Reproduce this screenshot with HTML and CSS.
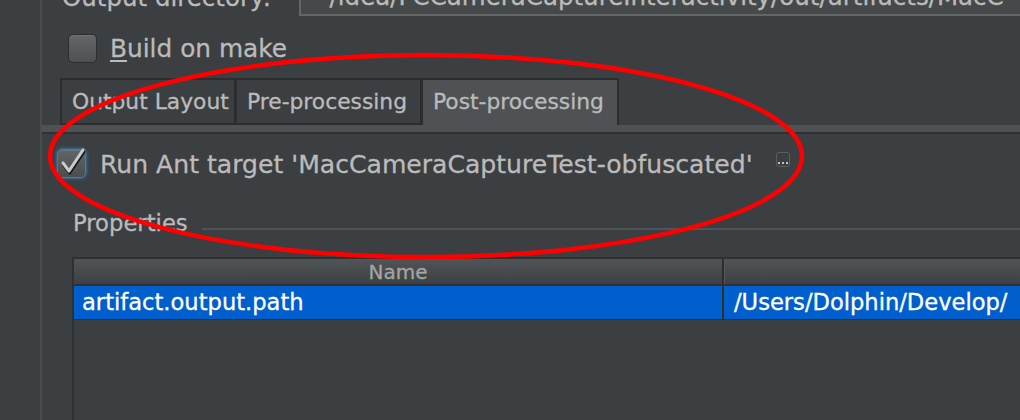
FILE: index.html
```html
<!DOCTYPE html>
<html>
<head>
<meta charset="utf-8">
<link rel="stylesheet" href="styles.css">
</head>
<body>
<div class="app">
  <div class="sidebar"></div>
  <div class="main">
    <div class="outdir-row">
      <span class="outdir-label">Output directory:</span>
      <div class="outdir-field">~/idea/FCCameraCaptureInteractivity/out/artifacts/MacC</div>
    </div>
    <div class="build-row">
      <span class="checkbox"></span>
      <span class="build-label"><u>B</u>uild on make</span>
    </div>
    <div class="tabs">
      <div class="tab tab-output">Output Layout</div>
      <div class="tab tab-pre">Pre-processing</div>
      <div class="tab tab-post tab-selected">Post-processing</div>
    </div>
    <div class="tab-strip"></div>
    <div class="content">
      <div class="ant-row">
        <span class="checkbox checkbox-checked">
          <svg viewBox="0 0 32 32" width="32" height="32">
            <path d="M7 17 L13 25 L27 4" fill="none" stroke="#17191a" stroke-width="3.4" stroke-linecap="round" stroke-linejoin="round" transform="translate(0.6,1.8)"/>
            <path d="M7 17 L13 25 L27 4" fill="none" stroke="#cacaca" stroke-width="3.1" stroke-linecap="round" stroke-linejoin="round"/>
          </svg>
        </span>
        <span class="ant-label">Run Ant target 'MacCameraCaptureTest-obfuscated'</span>
        <span class="more-btn"><i></i><i></i><i></i></span>
      </div>
      <div class="props-row">
        <span class="props-label">Properties</span>
        <span class="props-line"></span>
      </div>
      <div class="table">
        <div class="thead">
          <div class="th th-name">Name</div>
          <div class="th th-value"></div>
        </div>
        <div class="tr tr-selected">
          <div class="td td-name">artifact.output.path</div>
          <div class="td td-value">/Users/Dolphin/Develop/</div>
        </div>
        <div class="tbody-empty"></div>
      </div>
    </div>
  </div>
</div>
<svg class="annotation" width="1020" height="420" viewBox="0 0 1020 420">
  <ellipse cx="426" cy="156" rx="376" ry="101" fill="none" stroke="#ff0000" stroke-width="4.5"/>
</svg>
</body>
</html>
```

FILE: styles.css
```css
html, body {
  margin: 0;
  padding: 0;
}
body {
  width: 1020px;
  height: 420px;
  overflow: hidden;
  background: #3c3f41;
  font-family: "DejaVu Sans", "Liberation Sans", sans-serif;
  color: #bbbbbb;
  -webkit-text-stroke: 0.3px currentColor;
  position: relative;
}
.app {
  display: flex;
  height: 420px;
}
.sidebar {
  width: 40px;
  flex: none;
  background: #3c3f41;
  border-right: 2px solid #4a4d4f;
}
.main {
  flex: 1;
  min-width: 0;
  display: flex;
  flex-direction: column;
}

/* output directory row (cut off at the top) */
.outdir-row {
  display: flex;
  align-items: flex-end;
  height: 30px;
  margin-top: -14px;
  padding-left: 20px;
}
.outdir-label {
  font-size: 24.5px;
  line-height: 24px;
  width: 237px;
  flex: none;
  position: relative;
  top: -6px;
}
.outdir-field {
  flex: 1;
  height: 28px;
  background: #45494a;
  border: 2px solid #646767;
  border-right: none;
  font-size: 24.5px;
  line-height: 22px;
  padding-left: 8px;
  white-space: nowrap;
  overflow: hidden;
}

/* build on make */
.build-row {
  display: flex;
  align-items: center;
  margin-top: 18px;
  padding-left: 26px;
  height: 28px;
  gap: 13px;
}
.checkbox {
  width: 27px;
  height: 27px;
  flex: none;
  border: 1px solid #2c2e2f;
  border-radius: 5px;
  background: linear-gradient(#646768, #4e5152);
  box-shadow: inset 0 1px 0 rgba(255,255,255,0.08);
  position: relative;
}
.build-label {
  font-size: 24.8px;
  line-height: 28px;
  position: relative;
  top: 1px;
}
.build-label u {
  text-underline-offset: 3px;
}

/* tabs */
.tabs {
  display: flex;
  margin-top: 16px;
  padding-left: 18px;
  height: 47px;
}
.tab {
  box-sizing: border-box;
  height: 47px;
  border: 2px solid #2b2d2e;
  margin-right: -1px;
  font-size: 21.8px;
  line-height: 44px;
  padding: 0 0 0 10px;
  background: #3c3f41;
  white-space: nowrap;
}
.tab-output { width: 176px; }
.tab-pre { width: 187px; }
.tab-post { width: 198px; }
.tab-selected {
  background: #4e5254;
  border-bottom: none;
}
.tab-strip {
  height: 7px;
  background: #4e5254;
  border-bottom: 2px solid #2f3133;
}

/* content */
.content {
  display: flex;
  flex-direction: column;
  flex: 1;
}
.ant-row {
  display: flex;
  align-items: center;
  margin-top: 15px;
  padding-left: 15px;
  height: 29px;
}
.checkbox-checked {
  border: 1px solid #3b7fc0;
  box-shadow: 0 0 3px 1px #2f6ea8, inset 0 1px 0 rgba(255,255,255,0.08);
  background: linear-gradient(#626566, #4b4e4f);
}
.checkbox-checked svg {
  position: absolute;
  left: -2px;
  top: -4px;
}
.ant-label {
  margin-left: 14px;
  font-size: 25.1px;
  line-height: 29px;
  position: relative;
  top: 1px;
  white-space: nowrap;
}
.more-btn {
  margin-left: 23px;
  width: 12px;
  height: 11px;
  border: 1.5px solid #5b5e60;
  border-radius: 3px;
  display: flex;
  align-items: flex-end;
  justify-content: center;
  gap: 2px;
  padding-bottom: 2px;
  box-sizing: content-box;
  position: relative;
  top: -4px;
}
.more-btn i {
  width: 2px;
  height: 2px;
  background: #c0c0c0;
  display: block;
}

.props-row {
  display: flex;
  align-items: center;
  margin-top: 31px;
  padding-left: 31px;
  height: 28px;
}
.props-label {
  font-size: 22.7px;
  line-height: 28px;
  flex: none;
}
.props-line {
  flex: 1;
  height: 2px;
  background: #515456;
  margin-left: 14px;
  position: relative;
  top: 6px;
}

.table {
  margin-top: 20px;
  margin-left: 30px;
  flex: 1;
  display: flex;
  flex-direction: column;
  border-top: 2px solid #2e3031;
  border-left: 2px solid #2e3031;
}
.thead {
  display: flex;
  height: 25px;
  background: linear-gradient(#505457, #3e4143);
  border-bottom: 2px solid #2e3031;
}
.th {
  font-size: 20px;
  line-height: 26px;
  color: #a4a4a4;
  text-align: center;
}
.th-name {
  width: 648px;
  border-right: 2px solid #2b2d2e;
  box-shadow: 1px 0 0 #55595b;
}
.th-value {
  flex: 1;
}
.tr {
  display: flex;
  height: 33px;
  border-bottom: 1px solid #2e3031;
}
.tr-selected {
  background: #005fcc;
}
.td {
  color: #ffffff;
  font-size: 22.6px;
  line-height: 33px;
  white-space: nowrap;
  overflow: hidden;
}
.td-name {
  width: 640px;
  padding-left: 8px;
  border-right: 2px solid #2e3031;
}
.td-value {
  flex: 1;
  padding-left: 10px;
}
.tbody-empty {
  flex: 1;
}

.annotation {
  position: absolute;
  left: 0;
  top: 0;
  pointer-events: none;
}
```
